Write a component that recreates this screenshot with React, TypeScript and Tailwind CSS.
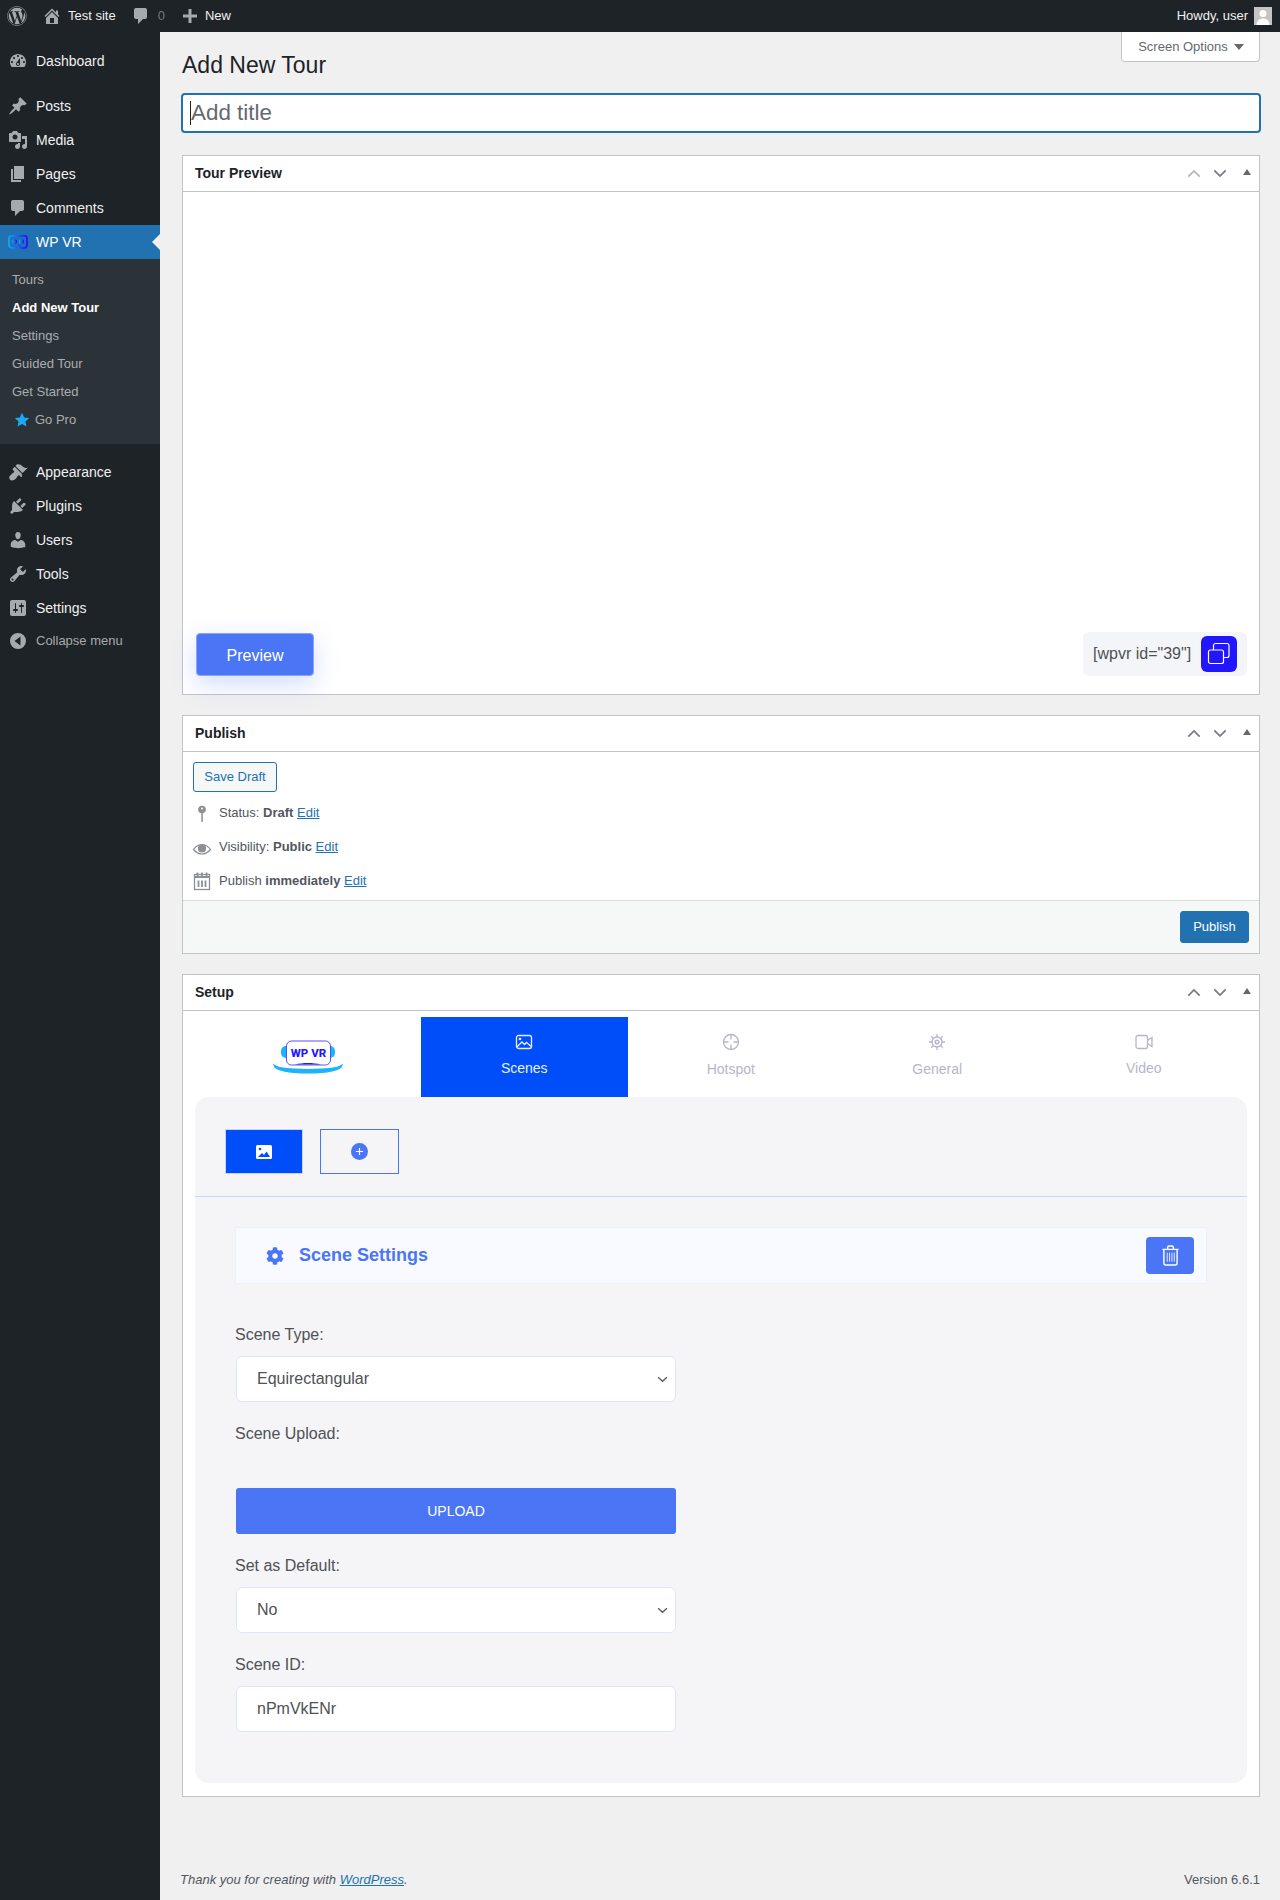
import { FC, ReactNode } from 'react';
import { FaWordpress, FaCog } from 'react-icons/fa';

const paths: Record<string, string> = {
  home: 'M16 8.5l1.53 1.53-1.06 1.06L10 4.62l-6.47 6.47-1.06-1.06L10 2.5l4 4v-2h2v4zm-6-2.46l6 5.99V18H4v-5.97zM12 17v-5H8v5h4z',
  comment: 'M5 2h9c1.1 0 2 .9 2 2v7c0 1.1-.9 2-2 2h-2l-5 5v-5H5c-1.1 0-2-.9-2-2V4c0-1.1.9-2 2-2z',
  plus: 'M17 8.5v3h-5.5V17h-3v-5.5H3v-3h5.5V3h3v5.500z',
  dashboard: 'M3.76 16h12.48c1.1-1.37 1.76-3.11 1.76-5 0-4.42-3.58-8-8-8s-8 3.58-8 8c0 1.89.66 3.63 1.76 5zM10 4c.55 0 1 .45 1 1s-.45 1-1 1-1-.45-1-1 .45-1 1-1zM6 6c.55 0 1 .45 1 1s-.45 1-1 1-1-.45-1-1 .45-1 1-1zm8 0c.55 0 1 .45 1 1s-.45 1-1 1-1-.45-1-1 .45-1 1-1zm-5.370 5.550L12 7v6c0 1.100-.9 2-2 2s-2-.9-2-2c0-.57.24-1.080.63-1.450zM4 10c.55 0 1 .45 1 1s-.45 1-1 1-1-.45-1-1 .45-1 1-1zm12 0c.55 0 1 .45 1 1s-.45 1-1 1-1-.45-1-1 .45-1 1-1zm-5 3c0-.55-.45-1-1-1s-1 .45-1 1 .45 1 1 1 1-.45 1-1z',
  posts: 'M10.440 3.020l1.820-1.820 6.360 6.350-1.830 1.820c-1.050-.68-2.480-.57-3.410.36l-.75.75c-.92.93-1.040 2.350-.35 3.410l-1.830 1.820-2.410-2.410-2.800 2.790c-.42.42-3.380 2.710-3.800 2.290s1.860-3.390 2.280-3.810l2.790-2.790L4.100 9.360l1.830-1.820c1.050.69 2.480.57 3.400-.36l.75-.75c.93-.92 1.050-2.350.36-3.410z',
  media: 'M13 11V4c0-.55-.45-1-1-1h-1.670L9 1H5L3.670 3H2c-.55 0-1 .45-1 1v7c0 .55.45 1 1 1h10c.55 0 1-.45 1-1zM7 4.500c1.380 0 2.500 1.120 2.500 2.500S8.380 9.500 7 9.500 4.500 8.380 4.500 7 5.620 4.500 7 4.500zM14 6h5v10.500c0 1.380-1.120 2.500-2.500 2.500S14 17.880 14 16.500s1.120-2.500 2.500-2.500c.17 0 .34.020.5.050V9h-3V6zm-4 8.050V13h2v3.500c0 1.380-1.120 2.500-2.500 2.500S7 17.880 7 16.500 8.120 14 9.500 14c.17 0 .34.020.5.050z',
  pages: 'M6 15V2h10v13H6zm-1 1h8v2H3V5h2v11z',
  appearance: 'M14.480 11.060L7.410 3.990l1.500-1.500c.5-.56 2.300-.47 3.510.32 1.210.8 1.430 1.280 2.910 2.100 1.180.64 2.450 1.260 4.450.85zm-.71.71L6.700 4.700 4.930 6.470c-.39.39-.39 1.020 0 1.410l1.060 1.060c.39.39.39 1.030 0 1.420-.6.6-1.430 1.110-2.210 1.690-.35.26-.7.53-1.010.84C1.430 13.710.96 15.120 1.400 16.440c1.030 3.080 4.430 2.200 6.270.36.3-.31.58-.66.84-1.010.58-.78 1.090-1.610 1.690-2.210.39-.39 1.020-.39 1.410 0l1.060 1.060c.39.39 1.020.39 1.410 0z',
  plugins: 'M13.110 4.360L9.870 7.600 8 5.730l3.240-3.240c.35-.34 1.050-.2 1.560.32.52.51.66 1.210.31 1.550zm-8 1.770l.91-1.120 9.010 9.010-1.190.84c-.71.71-2.630 1.160-3.820 1.160H6.140L4.900 17.260c-.59.59-1.540.59-2.120 0-.59-.58-.59-1.530 0-2.120l1.240-1.240v-3.880c0-1.130.4-3.190 1.090-3.890zm7.260 3.970l3.240-3.240c.34-.35 1.040-.21 1.550.31.52.51.66 1.210.31 1.550l-3.240 3.250z',
  users: 'M10 9.250c-2.270 0-2.730-3.440-2.730-3.440C7 4.020 7.820 2 9.970 2c2.160 0 2.980 2.020 2.710 3.810 0 0-.41 3.440-2.680 3.440zm0 2.570L12.720 10c2.390 0 4.520 2.330 4.520 4.530v2.490s-3.650 1.130-7.240 1.130c-3.650 0-7.240-1.130-7.240-1.130v-2.490c0-2.250 1.940-4.480 4.470-4.480z',
  tools: 'M16.680 9.770c-1.340 1.340-3.300 1.670-4.950.99l-5.410 6.520c-.99.99-2.590.99-3.580 0s-.99-2.590 0-3.570l6.520-5.420c-.68-1.650-.35-3.610.99-4.950 1.280-1.280 3.120-1.620 4.720-1.060l-2.890 2.890 2.820 2.820 2.860-2.870c.53 1.580.18 3.390-1.080 4.650zM3.810 16.210c.4.39 1.040.39 1.430 0 .4-.4.4-1.040 0-1.430-.39-.4-1.030-.4-1.430 0-.39.39-.39 1.030 0 1.430z',
  settings: 'M18 16V4c0-1.100-.9-2-2-2H4c-1.100 0-2 .9-2 2v12c0 1.100.9 2 2 2h12c1.100 0 2-.9 2-2zM8 11h1c.55 0 1 .45 1 1s-.45 1-1 1H8v1.500c0 .28-.22.5-.5.5s-.5-.22-.5-.5V13H6c-.55 0-1-.45-1-1s.45-1 1-1h1V5.500c0-.28.22-.5.5-.5s.5.22.5.5V11zm5-2h-1c-.55 0-1-.45-1-1s.45-1 1-1h1V5.500c0-.28.22-.5.5-.5s.5.22.5.5V7h1c.55 0 1 .45 1 1s-.45 1-1 1h-1v5.500c0 .28-.22.5-.5.5s-.5-.22-.5-.5V9z',
  collapse: 'M10 2a8 8 0 1 0 0 16 8 8 0 0 0 0-16zM12.500 5.500v9L6.500 10z',
};

const Dash: FC<{ name: string; className?: string }> = ({ name, className }) => (
  <svg viewBox="0 0 20 20" fill="currentColor" fillRule="evenodd" className={className}>
    <path d={paths[name]} />
  </svg>
);

const VrIcon = () => (
  <svg viewBox="0 0 20 14" className="w-5 h-[14px]" fill="none" strokeWidth="1.800">
    <defs>
      <linearGradient id="vr" x1="0" x2="1" y1="0" y2="0">
        <stop offset="0" stopColor="#14a3f5" />
        <stop offset="1" stopColor="#2216ff" />
      </linearGradient>
    </defs>
    <path d="M3 1h14a2 2 0 0 1 2 2v7a3 3 0 0 1-3 3h-3l-1.500-2.500h-3L7 13H4a3 3 0 0 1-3-3V3a2 2 0 0 1 2-2z" stroke="url(#vr)" />
    <circle cx="6.500" cy="6.500" r="1.800" stroke="url(#vr)" strokeWidth="1.400" />
    <circle cx="13.500" cy="6.500" r="1.800" stroke="url(#vr)" strokeWidth="1.400" />
  </svg>
);

const MenuItem: FC<{ icon: string; label: string }> = ({ icon, label }) => (
  <div className="h-[34px] flex items-center text-[14px] text-[#f0f0f1]">
    <div className="w-9 flex justify-center text-[#a7aaad]">
      <Dash name={icon} className="w-5 h-5" />
    </div>
    <span>{label}</span>
  </div>
);

const Sidebar = () => (
  <aside className="w-40 shrink-0 bg-[#1d2327] pt-3">
    <MenuItem icon="dashboard" label="Dashboard" />
    <div className="h-[11px]" />
    <MenuItem icon="posts" label="Posts" />
    <MenuItem icon="media" label="Media" />
    <MenuItem icon="pages" label="Pages" />
    <MenuItem icon="comment" label="Comments" />
    <div className="relative h-[34px] flex items-center bg-[#2271b1] text-[14px] text-white">
      <div className="w-9 flex justify-center">
        <VrIcon />
      </div>
      <span>WP VR</span>
      <div className="absolute right-0 top-[9px] border-y-[8px] border-r-[8px] border-y-transparent border-r-[#f0f0f1]" />
    </div>
    <div className="bg-[#2c3338] pt-[7px] pb-[10px] text-[13px] text-[#a9adb1]">
      <div className="h-[28px] flex items-center pl-3">Tours</div>
      <div className="h-[28px] flex items-center pl-3 font-bold text-white">Add New Tour</div>
      <div className="h-[28px] flex items-center pl-3">Settings</div>
      <div className="h-[28px] flex items-center pl-3">Guided Tour</div>
      <div className="h-[28px] flex items-center pl-3">Get Started</div>
      <div className="h-[28px] flex items-center pl-[14px]">
        <svg viewBox="0 0 20 20" className="w-4 h-4 mr-[5px]" fill="#19aaf8">
          <path d="M10 1l2.700 5.900 6.300.7-4.700 4.300 1.300 6.300L10 15l-5.600 3.200 1.300-6.300L1 7.600l6.300-.7z" />
        </svg>
        Go Pro
      </div>
    </div>
    <div className="h-[11px]" />
    <MenuItem icon="appearance" label="Appearance" />
    <MenuItem icon="plugins" label="Plugins" />
    <MenuItem icon="users" label="Users" />
    <MenuItem icon="tools" label="Tools" />
    <MenuItem icon="settings" label="Settings" />
    <div className="h-[32px] flex items-center text-[13px] text-[#a7aaad]">
      <div className="w-9 flex justify-center">
        <Dash name="collapse" className="w-5 h-5" />
      </div>
      <span>Collapse menu</span>
    </div>
  </aside>
);

const TopBar = () => (
  <header className="h-8 bg-[#1d2327] flex items-center text-[13px] text-[#f0f0f1]">
    <FaWordpress className="w-5 h-5 ml-[7px] text-[#a7aaad]" />
    <Dash name="home" className="w-5 h-5 ml-[15px] text-[#a7aaad]" />
    <span className="ml-[6px]">Test site</span>
    <Dash name="comment" className="w-5 h-5 ml-[15px] text-[#a7aaad]" />
    <span className="ml-[7px] text-[#72777c]">0</span>
    <Dash name="plus" className="w-5 h-5 ml-[15px] text-[#a7aaad]" />
    <span className="ml-[5px]">New</span>
    <div className="ml-auto flex items-center mr-2">
      <span>Howdy, user</span>
      <div className="w-[18px] h-[18px] ml-[6px] bg-[#c4c4c4] overflow-hidden flex justify-center">
        <svg viewBox="0 0 18 18" className="w-[18px] h-[18px]" fill="#fff">
          <circle cx="9" cy="6.500" r="3.500" />
          <path d="M2.500 18c0-4.500 3-6.500 6.500-6.500s6.500 2 6.500 6.500z" />
        </svg>
      </div>
    </div>
  </header>
);

const Handles: FC<{ upDisabled?: boolean }> = ({ upDisabled }) => (
  <div className="ml-auto flex items-center text-[#787c82]">
    <svg
      viewBox="0 0 16 10"
      className={`w-[14px] h-[9px] mr-[12px] ${upDisabled ? 'text-[#b4b6b9]' : ''}`}
      fill="none"
      stroke="currentColor"
      strokeWidth="2"
    >
      <path d="M1.500 8.500L8 2l6.500 6.500" />
    </svg>
    <svg viewBox="0 0 16 10" className="w-[14px] h-[9px] mr-[16px]" fill="none" stroke="currentColor" strokeWidth="2">
      <path d="M1.500 1.500L8 8l6.500-6.500" />
    </svg>
    <div className="w-0 h-0 mr-[8px] mb-[4px] border-x-[4px] border-b-[6px] border-x-transparent border-b-[#646970]" />
  </div>
);

const Box: FC<{ title: string; className?: string; upDisabled?: boolean; children: ReactNode }> = ({
  title,
  className,
  upDisabled,
  children,
}) => (
  <section className={`bg-white border border-[#c3c4c7] ${className ?? ''}`}>
    <div className="h-[36px] border-b border-[#c3c4c7] flex items-center pl-3 text-[14px] font-bold text-[#1d2327]">
      {title}
      <Handles upDisabled={upDisabled} />
    </div>
    {children}
  </section>
);

const Field: FC<{ label: string; children?: ReactNode; className?: string }> = ({ label, children, className }) => (
  <div className={className}>
    <div className="text-[16px] leading-[20px] text-[#4f5154]">{label}</div>
    {children}
  </div>
);

const SelectBox: FC<{ value: string; className?: string }> = ({ value, className }) => (
  <div
    className={`ml-px w-[440px] h-[46px] bg-white border border-[#dfe6fb] rounded-md flex items-center pl-[20px] pr-[7px] text-[16px] text-[#4f5154] ${className ?? ''}`}
  >
    {value}
    <svg viewBox="0 0 12 8" className="ml-auto w-[11px] h-[7px]" fill="none" stroke="#5a5d60" strokeWidth="1.600">
      <path d="M1 1.500l5 4.500 5-4.500" />
    </svg>
  </div>
);

const PublishRow: FC<{ icon: ReactNode; text: string; bold: string }> = ({ icon, text, bold }) => (
  <div className="h-[34px] flex items-center text-[13px] text-[#50575e]">
    <div className="w-[25px] -ml-px flex justify-start">{icon}</div>
    <span className="ml-[2px]">
      {text} <b>{bold}</b> <a className="text-[#2271b1] underline">Edit</a>
    </span>
  </div>
);

const TopTab: FC<{ label: string; active?: boolean; icon: ReactNode; labelClass?: string }> = ({
  label,
  active,
  icon,
  labelClass,
}) => (
  <div
    className={`flex-1 flex flex-col items-center pt-[10px] text-[14px] ${active ? 'bg-[#004efa] text-[#e8eeff]' : 'text-[#b6b5cc]'}`}
  >
    {icon}
    <span className={labelClass ?? 'mt-[7px]'}>{label}</span>
  </div>
);

const tabIconClass = 'w-[18px] h-[18px] mt-[6px]';

const App = () => {
  return (
    <div className="min-h-[1900px] flex flex-col bg-[#f0f0f1] font-['Liberation_Sans',Arial,sans-serif]">
      <TopBar />
      <div className="flex flex-1">
        <Sidebar />
        <main className="relative flex-1 min-w-0 pl-[22px] pr-5">
          <div className="absolute right-5 top-0 w-[139px] h-[30px] pl-px bg-white border border-t-0 border-[#c3c4c7] rounded-b flex items-center justify-center text-[13px] text-[#646970]">
            Screen Options
            <div className="w-0 h-0 ml-[6px] border-x-[5px] border-t-[6px] border-x-transparent border-t-[#646970]" />
          </div>

          <h1 className="pt-[18px] text-[23px] leading-[30px] text-[#1d2327]">Add New Tour</h1>

          <div className="mt-[13px] -mx-px h-10 bg-white border-2 border-[#2271b1] rounded flex items-center pl-[7px] text-[1.4rem] text-[#646970]">
            <div className="w-px h-6 bg-[#1d2327]" />
            Add title
          </div>

          <Box title="Tour Preview" className="mt-[22px]" upDisabled>
            <div className="h-[502px] flex items-end justify-between pl-[13px] pr-3 pb-[18px]">
              <button className="w-[118px] h-[43px] pt-[3px] rounded border border-[#8aa5f8] bg-[#4a76f6] text-white text-[16px] shadow-[0_8px_24px_rgba(74,118,246,0.25)]">
                Preview
              </button>
              <div className="w-[164px] h-[44px] rounded-md bg-[#f4f5f9] flex items-center pl-[10px] text-[16px] text-[#4f5154]">
                [wpvr id="39"]
                <div className="ml-auto mr-[10px] w-9 h-9 rounded-md bg-[#2216ff]">
                  <svg viewBox="0 0 36 36" className="w-9 h-9" fill="none" stroke="#fff" strokeWidth="1.200">
                    <rect x="7.500" y="14" width="15" height="13.500" rx="2" />
                    <path d="M12.500 14v-4.500a2 2 0 0 1 2-2h11.500a2 2 0 0 1 2 2v10a2 2 0 0 1-2 2h-3.500" />
                  </svg>
                </div>
              </div>
            </div>
          </Box>

          <Box title="Publish" className="mt-5">
            <div className="pl-[10px] pt-[10px] pb-[2px]">
              <div className="w-[84px] h-[30px] border border-[#2271b1] rounded-[3px] bg-[#f6f7f7] text-[13px] text-[#2271b1] flex items-center justify-center">
                Save Draft
              </div>
              <div className="mt-[4px]">
                <PublishRow
                  text="Status:"
                  bold="Draft"
                  icon={
                    <svg viewBox="0 0 20 20" className="w-5 h-5 text-[#8c8f94]" fill="currentColor">
                      <circle cx="10" cy="6.500" r="3.800" />
                      <rect x="9.300" y="8" width="1.500" height="11" />
                      <circle cx="10" cy="5.500" r="1" fill="#fff" />
                    </svg>
                  }
                />
                <PublishRow
                  text="Visibility:"
                  bold="Public"
                  icon={
                    <svg viewBox="0 0 20 20" className="w-5 h-5 mt-[3px] text-[#8c8f94]" fill="none" stroke="currentColor" strokeWidth="1.200">
                      <path d="M1.500 10.500C4 7 7 5.500 10 5.500s6 1.500 8.500 5c-2.500 3-5.500 4.500-8.500 4.500s-6-1.500-8.500-4.500z" />
                      <circle cx="10" cy="9.500" r="3.500" fill="currentColor" />
                    </svg>
                  }
                />
                <PublishRow
                  text="Publish"
                  bold="immediately"
                  icon={
                    <svg viewBox="0 0 20 20" className="w-5 h-5 text-[#8c8f94]" fill="none" stroke="currentColor" strokeWidth="1.300">
                      <rect x="2.500" y="3.500" width="15" height="15" />
                      <path d="M5.500 1.500v5M10 1.500v5M14.500 1.500v5M2.500 6h15" strokeWidth="1.800" />
                      <path d="M6.500 9.500v6.500M10 9.500v6.500M13.500 9.500v6.500" strokeWidth="1.800" />
                    </svg>
                  }
                />
              </div>
            </div>
            <div className="h-[53px] border-t border-[#dcdcde] bg-[#f6f7f7] flex items-center justify-end pr-[10px]">
              <div className="w-[69px] h-[32px] rounded-[3px] bg-[#2271b1] border border-[#2271b1] text-[13px] text-white flex items-center justify-center">
                Publish
              </div>
            </div>
          </Box>

          <Box title="Setup" className="mt-5">
            <div className="px-3 pt-[6px] pb-[13px]">
              <div className="flex h-[80px]">
                <div className="w-[226px] shrink-0 flex justify-center pt-[23px]">
                  <svg viewBox="0 0 70 34" className="w-[70px] h-[34px]">
                    <rect x="8" y="6" width="54" height="12" rx="5" fill="#19b4fb" />
                    <path d="M1 25c0 5 15 8 34 8s34-3 34-8c-3 3-16 4.500-34 4.500S4 28 1 25z" fill="#19b4fb" stroke="#19b4fb" strokeWidth="1.200" />
                    <rect x="13.500" y="1" width="44" height="24" rx="5" fill="#fff" stroke="#5a50f0" strokeWidth="1" />
                    <path d="M22 24.500c8-2 18-2 26 0z" fill="#2216ff" />
                    <text x="35.500" y="17" textAnchor="middle" fontSize="11.500" fontWeight="800" fill="#2216ff" fontFamily="Roboto, sans-serif">
                      WP VR
                    </text>
                  </svg>
                </div>
                <TopTab
                  label="Scenes"
                  active
                  icon={
                    <svg viewBox="0 0 18 18" className={tabIconClass} fill="none" stroke="currentColor" strokeWidth="1.300">
                      <rect x="1.500" y="2.500" width="15" height="13" rx="2" />
                      <path d="M1.800 14l5.200-5 2.500 2.500 2-2 4.700 4" />
                      <circle cx="5" cy="6" r=".7" fill="currentColor" />
                    </svg>
                  }
                />
                <TopTab
                  label="Hotspot"
                  labelClass="mt-[8px]"
                  icon={
                    <svg viewBox="0 0 18 18" className={tabIconClass} fill="none" stroke="currentColor" strokeWidth="1.300">
                      <circle cx="9" cy="9" r="7.500" />
                      <path d="M9 1.500v5M9 11.500v5M1.500 9h5M11.500 9h5" />
                    </svg>
                  }
                />
                <TopTab
                  label="General"
                  labelClass="mt-[8px]"
                  icon={
                    <svg viewBox="0 0 18 18" className={tabIconClass} fill="none" stroke="currentColor" strokeWidth="1.300">
                      <circle cx="9" cy="9" r="5" />
                      <circle cx="9" cy="9" r="1.800" strokeWidth="1.500" />
                      <path d="M9 1v3M9 14v3M1 9h3M14 9h3M3.300 3.300l2.100 2.100M12.600 12.600l2.100 2.100M3.300 14.700l2.100-2.100M12.600 5.400l2.100-2.100" />
                    </svg>
                  }
                />
                <TopTab
                  label="Video"
                  icon={
                    <svg viewBox="0 0 18 18" className={tabIconClass} fill="none" stroke="currentColor" strokeWidth="1.300">
                      <rect x="1" y="2.500" width="11.500" height="13" rx="2" />
                      <path d="M12.500 7.500l4.500-3v9l-4.500-3" />
                    </svg>
                  }
                />
              </div>

              <div className="bg-[#f5f5f8] rounded-[14px] pb-[51px]">
                <div className="h-[100px] border-b border-[#c8d6fb] pl-[30px] pt-[32px] flex items-start gap-[17px]">
                  <div className="w-[78px] h-[45px] bg-[#004efa] border border-[#c8d6fb] flex items-center justify-center">
                    <svg viewBox="0 0 16 14" className="w-4 h-[14px]">
                      <rect width="16" height="14" rx="1.500" fill="#fff" />
                      <circle cx="4" cy="4" r="1.300" fill="#004efa" />
                      <path d="M2 12l4-4 2 2 2.500-3.500L14 12z" fill="#004efa" />
                    </svg>
                  </div>
                  <div className="w-[79px] h-[45px] border border-[#4a76f6] flex items-center justify-center">
                    <div className="w-[17px] h-[17px] rounded-full bg-[#4a76f6] flex items-center justify-center">
                      <svg viewBox="0 0 10 10" className="w-[9px] h-[9px]" stroke="#fff" strokeWidth="1.300">
                        <path d="M5 1v8M1 5h8" />
                      </svg>
                    </div>
                  </div>
                </div>

                <div className="pl-10 pr-10 pt-[30px]">
                  <div className="h-[57px] bg-[#f9faff] border border-[#eef1f9] flex items-center pl-[30px] pr-[12px]">
                    <FaCog className="w-[18px] h-[18px] text-[#4a76f6]" />
                    <span className="ml-[15px] text-[18px] font-bold text-[#4a76f6]">Scene Settings</span>
                    <div className="ml-auto w-[48px] h-[37px] rounded bg-[#4a76f6] flex items-center justify-center">
                      <svg viewBox="0 0 18 22" className="w-[17px] h-[21px]" fill="none" stroke="#fff" strokeWidth="1.500">
                        <path d="M.5 4.500h17M6 4V2.500A1.500 1.500 0 0 1 7.500 1h3A1.500 1.500 0 0 1 12 2.500V4" />
                        <path d="M2 4.500V19a2 2 0 0 0 2 2h10a2 2 0 0 0 2-2V4.500" />
                        <path d="M5.500 8v9.500M8 8v9.500M10.500 8v9.500M13 8v9.500" strokeWidth=".9" />
                      </svg>
                    </div>
                  </div>

                  <Field label="Scene Type:" className="mt-[41px]">
                    <SelectBox value="Equirectangular" className="mt-[11px]" />
                  </Field>
                  <Field label="Scene Upload:" className="mt-[22px]">
                    <div className="mt-[44px] ml-px w-[440px] h-[46px] rounded-[3px] bg-[#4a76f6] text-white text-[14px] flex items-center justify-center">
                      UPLOAD
                    </div>
                  </Field>
                  <Field label="Set as Default:" className="mt-[22px]">
                    <SelectBox value="No" className="mt-[11px]" />
                  </Field>
                  <Field label="Scene ID:" className="mt-[22px]">
                    <div className="mt-[11px] ml-px w-[440px] h-[46px] bg-white border border-[#dfe6fb] rounded-md flex items-center pl-[20px] text-[16px] text-[#4f5154]">
                      nPmVkENr
                    </div>
                  </Field>
                </div>
              </div>
            </div>
          </Box>

          <footer className="absolute left-5 right-5 top-[1838px] flex justify-between text-[13px] text-[#50575e]">
            <i>
              Thank you for creating with <a className="text-[#2271b1] underline">WordPress</a>.
            </i>
            <span>Version 6.6.1</span>
          </footer>
        </main>
      </div>
    </div>
  );
};

export default App;
